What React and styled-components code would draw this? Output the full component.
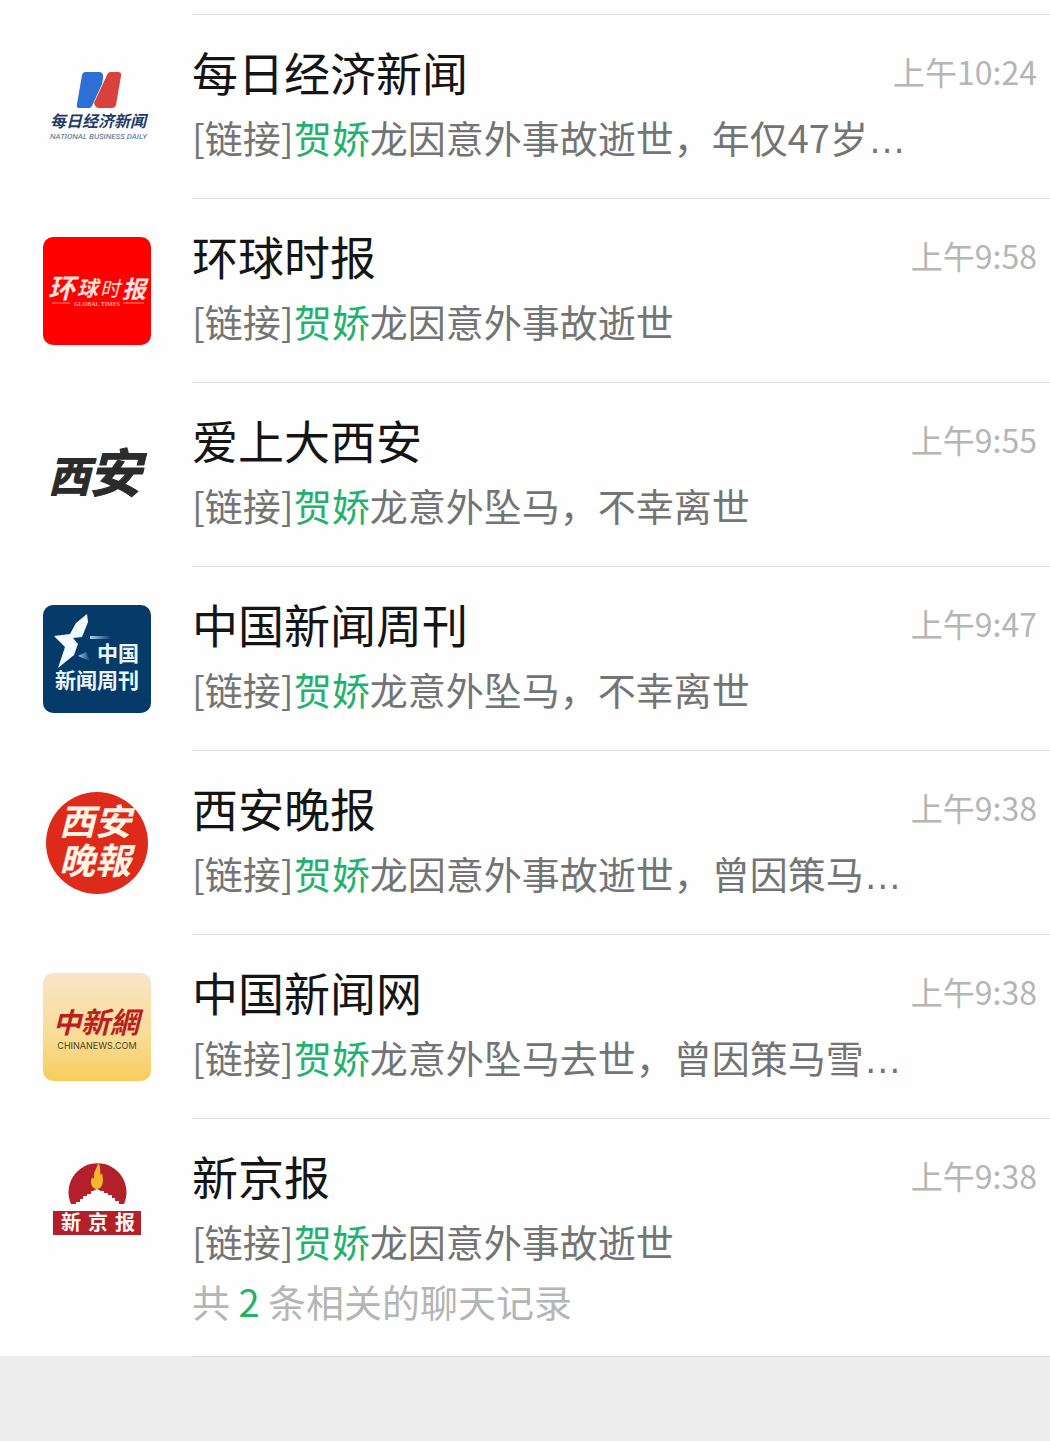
import styled, { createGlobalStyle } from "styled-components";

const GlobalStyle = createGlobalStyle`
  * {
    box-sizing: border-box;
  }

  body {
    margin: 0;
    background-color: #ededed;
    font-family: "Noto Sans CJK SC", sans-serif;
  }
`;

const Page = styled.main`
  min-height: 100vh;
  background-color: #ededed;
`;

const ChatList = styled.ul`
  margin: 0;
  padding: 14px 0 0;
  list-style: none;
  background-color: #fefefe;
`;

const ChatLink = styled.a`
  display: flex;
  padding-left: 43px;
  color: inherit;
  text-decoration: none;
`;

const Avatar = styled.svg`
  flex: none;
  width: 108px;
  height: 108px;
  margin-top: 39px;
  border-radius: 10px;
  background: ${(props) => props.$background || "transparent"};
  font-family: "Noto Sans CJK SC", sans-serif;
  font-weight: 700;
`;

const ChatBody = styled.div`
  flex: 1;
  min-width: 0;
  min-height: 184px;
  margin-left: 41px;
  padding: 26px 13px 25px 0;
  border-top: 1px solid #e2e2e2;
`;

const TitleRow = styled.div`
  display: flex;
  justify-content: space-between;
  align-items: center;
  margin-bottom: 6px;
`;

const Title = styled.h2`
  margin: 0;
  color: #151515;
  font-size: 46px;
  font-weight: 400;
  line-height: 60px;
`;

const Time = styled.time`
  flex: none;
  color: #b5b5b5;
  font-size: 32px;
  line-height: 60px;
`;

const Message = styled.p`
  margin: 0;
  overflow: hidden;
  color: ${(props) => (props.$muted ? "#b5b5b5" : "#747474")};
  font-size: 38px;
  line-height: 60px;
  white-space: nowrap;
`;

const Highlight = styled.span`
  color: #20b26b;
`;

const Ellipsis = styled.span`
  font-family: "Liberation Sans", sans-serif;
`;

const ListEnd = styled.div`
  height: 1px;
  margin-left: 192px;
  background-color: #e0e0e0;
`;

const BusinessDailyLogo = () => (
  <Avatar viewBox="0 0 108 108" role="img" aria-label="每日经济新闻">
    <path
      d="M42 19H57Q61 20 60 26L59 31L49 53Q48 55 46 55H36Q33 55 34 51L39 22Q40 19 42 19Z"
      fill="#2e6fd6"
    />
    <path
      d="M67 19H75Q79 19 78 23L73 52Q72 55 69 55H55Q52 54 51 50L64 22Q65 19 67 19Z"
      fill="#d9413f"
    />
    <text x="7" y="74" fontSize="16" fontStyle="italic" fill="#1f3d68">
      每日经济新闻
    </text>
    <text
      x="7"
      y="86"
      fontSize="8"
      fontStyle="italic"
      fontWeight="400"
      fontFamily="Roboto, sans-serif"
      fill="#4a6482"
    >
      NATIONAL BUSINESS DAILY
    </text>
  </Avatar>
);

const GlobalTimesLogo = () => (
  <Avatar
    viewBox="0 0 108 108"
    role="img"
    aria-label="环球时报"
    $background="#fe0000"
  >
    <g fill="#ffe3dc" fontStyle="italic">
      <text x="5" y="61" fontSize="27">环</text>
      <text x="34" y="59" fontSize="21">球</text>
      <text x="57" y="59" fontSize="20" fontWeight="400">时</text>
      <text x="79" y="61" fontSize="24">报</text>
    </g>
    <path d="M9 66H27M80 66H101" stroke="#ff8a80" />
    <text
      x="54"
      y="69"
      fontSize="6"
      textAnchor="middle"
      fontFamily="Liberation Serif, serif"
      fill="#ffb3a8"
    >
      GLOBAL TIMES
    </text>
  </Avatar>
);

const LoveXianLogo = () => (
  <Avatar viewBox="0 0 108 108" role="img" aria-label="西安">
    <g
      fill="#2b2b2b"
      stroke="#2b2b2b"
      strokeLinejoin="round"
      fontStyle="italic"
    >
      <text x="5" y="71" fontSize="42">西</text>
      <text x="46" y="71" fontSize="52">安</text>
    </g>
  </Avatar>
);

const NewsWeekLogo = () => (
  <Avatar
    viewBox="0 0 108 108"
    role="img"
    aria-label="中国新闻周刊"
    $background="#063b69"
  >
    <defs>
      <linearGradient id="streak">
        <stop offset="0" stopColor="#a9d4f2" />
        <stop offset="1" stopColor="#a9d4f2" stopOpacity="0" />
      </linearGradient>
    </defs>
    <path
      d="M44 9L45 17L39 32L30 33L35 39L31 50L15 63L22 42L11 31L27 29L33 18Z"
      fill="#f2fbff"
    />
    <path d="M47 31H68V34H47Z" fill="url(#streak)" />
    <path d="M35 51L43 47L47 56Z" fill="url(#streak)" />
    <g fill="#eaf6ff" fontSize="21">
      <text x="54" y="56">中国</text>
      <text x="12" y="83">新闻周刊</text>
    </g>
  </Avatar>
);

const XianEveningLogo = () => (
  <Avatar viewBox="0 0 108 108" role="img" aria-label="西安晚报">
    <circle cx="54" cy="54" r="51" fill="#dd2a1b" />
    <g fill="#fff4e6" fontStyle="italic" fontSize="36">
      <text x="16" y="46">西安</text>
      <text x="16" y="85">晚報</text>
    </g>
  </Avatar>
);

const ChinaNewsLogo = () => (
  <Avatar
    viewBox="0 0 108 108"
    role="img"
    aria-label="中新网"
    $background="linear-gradient(#f9e4c8, #f9dc95 60%, #f6cd5c)"
  >
    <g fill="#b9201f" fontStyle="italic">
      <text x="10" y="60" fontSize="28">中</text>
      <text x="38" y="60" fontSize="29">新</text>
      <text x="67" y="60" fontSize="29">網</text>
    </g>
    <text
      x="54"
      y="76"
      fontSize="9"
      fontWeight="400"
      textAnchor="middle"
      fontFamily="Inter, sans-serif"
      fill="#4f3d22"
    >
      CHINANEWS.COM
    </text>
  </Avatar>
);

const BeijingNewsLogo = () => (
  <Avatar viewBox="0 0 108 108" role="img" aria-label="新京报">
    <path
      d="M28 47A29 29 0 1 1 81 47H76V44H72V41H69V38H65V36H61V34H58L54 32L50 34H48V37H44V39H40V42H37V45H33V47Z"
      fill="#b3202a"
    />
    <path
      d="M55 5C59 12 56 16 58 18L59 16C61 23 60 32 54 32C48 32 47 25 49 20C50 22 51 22 51 20C50 14 55 11 55 5Z"
      fill="#f5b52e"
    />
    <path d="M10 54H98V78H10Z" fill="#b3202a" />
    <g fill="#fff8f4" fontSize="20" textAnchor="middle">
      <text x="28" y="73">新</text>
      <text x="55" y="73">京</text>
      <text x="82" y="73">报</text>
    </g>
  </Avatar>
);

const chats = [
  {
    name: "每日经济新闻",
    time: "10:24",
    logo: BusinessDailyLogo,
    text: "龙因意外事故逝世，年仅47岁",
    truncated: true,
  },
  {
    name: "环球时报",
    time: "9:58",
    logo: GlobalTimesLogo,
    text: "龙因意外事故逝世",
  },
  {
    name: "爱上大西安",
    time: "9:55",
    logo: LoveXianLogo,
    text: "龙意外坠马，不幸离世",
  },
  {
    name: "中国新闻周刊",
    time: "9:47",
    logo: NewsWeekLogo,
    text: "龙意外坠马，不幸离世",
  },
  {
    name: "西安晚报",
    time: "9:38",
    logo: XianEveningLogo,
    text: "龙因意外事故逝世，曾因策马",
    truncated: true,
  },
  {
    name: "中国新闻网",
    time: "9:38",
    logo: ChinaNewsLogo,
    text: "龙意外坠马去世，曾因策马雪",
    truncated: true,
  },
  {
    name: "新京报",
    time: "9:38",
    logo: BeijingNewsLogo,
    text: "龙因意外事故逝世",
    related: 2,
  },
];

const ChatItem = ({ chat }) => {
  const Logo = chat.logo;

  return (
    <li>
      <ChatLink href="#">
        <Logo />
        <ChatBody>
          <TitleRow>
            <Title>{chat.name}</Title>
            <Time dateTime={chat.time.padStart(5, "0")}>上午{chat.time}</Time>
          </TitleRow>
          <Message>
            [链接]<Highlight>贺娇</Highlight>
            {chat.text}
            {chat.truncated && <Ellipsis>…</Ellipsis>}
          </Message>
          {chat.related && (
            <Message $muted>
              共 <Highlight>{chat.related}</Highlight> 条相关的聊天记录
            </Message>
          )}
        </ChatBody>
      </ChatLink>
    </li>
  );
};

const App = () => {
  return (
    <Page lang="zh-CN">
      <GlobalStyle />
      <ChatList>
        {chats.map((chat) => (
          <ChatItem key={chat.name} chat={chat} />
        ))}
      </ChatList>
      <ListEnd />
    </Page>
  );
};

export default App;
